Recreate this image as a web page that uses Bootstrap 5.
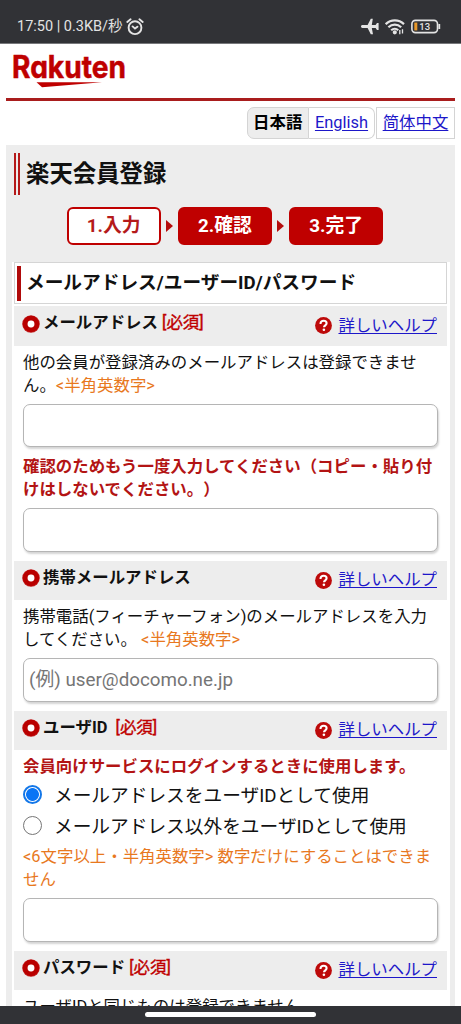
<!DOCTYPE html>
<html lang="ja">
<head>
<meta charset="utf-8">
<meta name="viewport" content="width=device-width, initial-scale=1">
<title>楽天会員登録</title>
<link href="https://cdn.jsdelivr.net/npm/bootstrap@5.3.0/dist/css/bootstrap.min.css" rel="stylesheet">
<style>
:root{--rk-red:#bf0000;--rk-gray:#ededed;--rk-dark:#313236}
body{font-family:Roboto,"Noto Sans CJK JP",sans-serif;font-size:16.43px;line-height:23px;color:#111;height:1024px;background:#fff;text-spacing-trim:space-all}
a{color:#1d17c9;text-underline-offset:2px}
.status-bar{height:43.5px;background:var(--rk-dark);color:#e2e2e2;font-size:14.5px;padding:11px 20px 0 17px;border-bottom:1px solid #77787b}
.status-icons{gap:6px}
.brand-row{height:57.5px;margin:0 6px;border-bottom:3px solid #a91d1d;padding:5px 0 0 6px}
.lang-row{height:44px;padding:6px 6px 5.5px}
.lang-row>*{height:32px;line-height:29px;border:1px solid #d4d4d4}
.lang-on{width:62.5px;background:var(--rk-gray);border-radius:7px 0 0 7px;color:#000}
.lang-en{width:66px;border-left:0!important;border-radius:0 7px 7px 0}
.lang-zh{width:79px;margin-left:1px}
.panel{margin:0 6px;background:var(--rk-gray);padding-top:8px;min-height:0}
.page-title{font-size:23.4px;line-height:42px;height:42px;padding-left:6px;color:#111}
.title-bars{width:6px;height:42px;border:solid #b51a1a;border-width:0 2px}
.steps{height:67px;padding:12px 0 0 61px}
.step{width:93.5px;height:38px;border:2px solid var(--rk-red);border-radius:6px;background:var(--rk-red);color:#fff;font-size:18.8px;line-height:34px}
.step-now{background:#fff;color:#b51a1a}
.step-arrow{width:7px;height:12px;margin:13px 5px 0 5.7px}
.sheet{margin:0 5px 0 6px;background:#fff;padding:0 3px 0 2px}
.sheet-title{height:42px;border:1px solid #d5d5d5;padding:3px 3px 2px 2px;font-size:18.7px;line-height:35px;margin-bottom:2px;color:#111}
.sheet-title::before{content:"";width:4px;height:35px;background:#b00a0a;margin-right:5px}
.field-head{height:39.5px;background:var(--rk-gray);padding:0 10px 0 8px;color:#111}
.field-head .lbl{line-height:34px}
.field-head .hlp{line-height:38px}
.ring{width:18px;height:18px;margin:8.5px 3px 0 0}
.q-mark{width:17px;height:17px;margin-right:6.5px}
.need{color:var(--rk-red);-webkit-text-stroke:.4px var(--rk-red)}
.warn{color:#b31414;font-weight:700}
.hint{color:#e8781e}
.field-body{padding:5px 9px 9px}
.field-body p{margin:0;white-space:nowrap}
.field-body .form-control{height:43.5px;margin-top:7px;border:1px solid #b5b5b5;border-radius:7px;box-shadow:1px 2px 2px #d5d5d5;font-size:18.8px;padding:0 5px;color:#111;background:#fff}
.form-control+.warn{margin-top:8px}
.choices{padding:3px 0 2px}
.form-control::placeholder{color:#757575!important}
.choice{height:31px;font-size:18.7px;line-height:31px;white-space:nowrap}
.choice input{appearance:none;width:19px;height:19px;border:1.5px solid #767676;border-radius:50%;margin:0 12px 4px 0;background:#fff}
.choice input:checked{border:2px solid #1377e8;background:radial-gradient(circle,#0a75f5 0 6px,#fff 6.8px)}
.nav-strip{height:18.5px;background:var(--rk-dark);padding-top:6.5px}
.nav-pill{width:171px;height:5px;border-radius:3px;background:#fff}
</style>
</head>
<body class="d-flex flex-column overflow-hidden">
<svg class="d-none">
  <symbol id="ring" viewBox="0 0 17 17"><circle cx="8.5" cy="8.5" r="8.3" fill="#c63030"/><circle cx="8.5" cy="8.5" r="5.6" fill="none" stroke="#b90000" stroke-width="4.4"/><circle cx="8.5" cy="8.5" r="3.2" fill="#fff"/></symbol>
  <symbol id="help" viewBox="0 0 17 17"><circle cx="8.5" cy="8.5" r="8.4" fill="#bd0a0a"/><path d="M5.5 6.9C5.5 4.8 6.8 3.8 8.6 3.8s3 1 3 2.5c0 2-2.6 2-2.6 4" fill="none" stroke="#fff" stroke-width="2.1"/><circle cx="8.9" cy="12.8" r="1.3" fill="#fff"/></symbol>
</svg>

<div class="status-bar d-flex flex-shrink-0 align-items-center justify-content-between">
  <div class="d-flex align-items-center">
    <span>17:50 | 0.3KB/秒</span>
    <svg width="18" height="18" viewBox="0 0 18 18" style="margin-left:3px" fill="none" stroke="#e4e4e4" stroke-width="1.9" stroke-linecap="round"><circle cx="9" cy="9.7" r="6.4"/><path d="M1.3 4 4.6 1.3M16.7 4l-3.3-2.7M6.6 8.4 9 10.6l2.4-1.9"/></svg>
  </div>
  <div class="status-icons d-flex align-items-center">
    <svg width="18" height="17" viewBox="0 0 18 17" fill="#e4e4e4"><path d="M0 8.5C0 7.8.6 7.1 1.4 7.1H6.6L9.8.8h2L10.8 7.1h3.8l1.4-2h1.6v6.8H16l-1.4-2h-3.8l1.2 6.3h-2.2L6.6 9.9H1.4C.6 9.9 0 9.2 0 8.5z"/></svg>
    <svg width="20" height="16" viewBox="0 0 20 16" fill="none" stroke="#e4e4e4" stroke-width="2.2"><path d="M.7 5.1C5.8.1 13.8.1 19 5.1M3.4 8.3c3.8-3.7 9-3.7 12.8 0M6.2 11.3c2.2-2.1 5-2.1 7 0"/><circle cx="9.8" cy="13.3" r="1" fill="#e4e4e4"/><path d="M14.8 11v4.3M17.5 10.3v4.1" stroke-width="1.3"/></svg>
    <svg width="30" height="15" viewBox="0 0 30 15"><rect x=".9" y="1.4" width="25.6" height="12.2" rx="3.5" fill="none" stroke="#e4e4e4" stroke-width="1.6"/><path d="M28.3 5v5" stroke="#e4e4e4" stroke-width="1.8"/><rect x="3.3" y="3.6" width="3" height="7.8" fill="#e8982a"/><text x="8.3" y="11" font-size="9.5" font-weight="500" fill="#e4e4e4">13</text></svg>
  </div>
</div>

<header class="brand-row flex-shrink-0">
  <svg class="d-block overflow-visible" width="116" height="40" viewBox="0 0 116 40" role="img" aria-label="Rakuten">
    <text x="0" y="29.2" textLength="114" lengthAdjust="spacingAndGlyphs" fill="#bf0000" stroke="#bf0000" stroke-width=".5" style="font:700 31px Inter,sans-serif;font-feature-settings:'cv11'">Rakuten</text>
    <path d="M24.5 33.2H90L30 38.2z" fill="#bf0000"/>
  </svg>
</header>

<nav class="lang-row d-flex flex-shrink-0 justify-content-end text-center">
  <strong class="lang-on">日本語</strong>
  <span class="lang-en"><a href="#">English</a></span>
  <span class="lang-zh"><a href="#">简体中文</a></span>
</nav>

<main class="panel flex-fill overflow-hidden">
  <div class="d-flex ms-2"><span class="title-bars"></span><h1 class="page-title m-0 fw-bold">楽天会員登録</h1></div>
  <div class="steps d-flex align-items-start text-center fw-bold">
    <span class="step step-now">1.入力</span>
    <svg class="step-arrow" viewBox="0 0 7 12"><path d="M0 0 7 6 0 12z" fill="#b50d0d"/></svg>
    <span class="step">2.確認</span>
    <svg class="step-arrow" viewBox="0 0 7 12"><path d="M0 0 7 6 0 12z" fill="#b50d0d"/></svg>
    <span class="step">3.完了</span>
  </div>

  <form class="sheet">
    <h2 class="sheet-title d-flex fw-bold">メールアドレス/ユーザーID/パスワード</h2>

    <section>
      <div class="field-head d-flex">
        <svg class="ring"><use href="#ring"/></svg>
        <span class="lbl flex-fill"><b>メールアドレス</b> <span class="need">[必須]</span></span>
        <span class="hlp d-flex align-items-center"><svg class="q-mark"><use href="#help"/></svg><a href="#">詳しいヘルプ</a></span>
      </div>
      <div class="field-body">
        <p>他の会員が登録済みのメールアドレスは登録できませ<br>ん。<span class="hint">&lt;半角英数字&gt;</span></p>
        <input class="form-control" type="text">
        <p class="warn">確認のためもう一度入力してください（コピー・貼り付<br>けはしないでください。）</p>
        <input class="form-control" type="text">
      </div>
    </section>

    <section>
      <div class="field-head d-flex">
        <svg class="ring"><use href="#ring"/></svg>
        <span class="lbl flex-fill"><b>携帯メールアドレス</b></span>
        <span class="hlp d-flex align-items-center"><svg class="q-mark"><use href="#help"/></svg><a href="#">詳しいヘルプ</a></span>
      </div>
      <div class="field-body">
        <p>携帯電話(フィーチャーフォン)のメールアドレスを入力<br>してください。 <span class="hint">&lt;半角英数字&gt;</span></p>
        <input class="form-control" type="text" placeholder="(例) user@docomo.ne.jp">
      </div>
    </section>

    <section>
      <div class="field-head d-flex">
        <svg class="ring"><use href="#ring"/></svg>
        <span class="lbl flex-fill"><b>ユーザID</b>&nbsp; <span class="need">[必須]</span></span>
        <span class="hlp d-flex align-items-center"><svg class="q-mark"><use href="#help"/></svg><a href="#">詳しいヘルプ</a></span>
      </div>
      <div class="field-body">
        <p class="warn">会員向けサービスにログインするときに使用します。</p>
        <div class="choices">
          <label class="choice d-flex align-items-center"><input type="radio" name="uid" checked>メールアドレスをユーザIDとして使用</label>
          <label class="choice d-flex align-items-center"><input type="radio" name="uid">メールアドレス以外をユーザIDとして使用</label>
        </div>
        <p class="hint">&lt;6文字以上・半角英数字&gt; 数字だけにすることはできま<br>せん</p>
        <input class="form-control" type="text">
      </div>
    </section>

    <section>
      <div class="field-head d-flex">
        <svg class="ring"><use href="#ring"/></svg>
        <span class="lbl flex-fill"><b>パスワード</b> <span class="need">[必須]</span></span>
        <span class="hlp d-flex align-items-center"><svg class="q-mark"><use href="#help"/></svg><a href="#">詳しいヘルプ</a></span>
      </div>
      <div class="field-body"><p>ユーザIDと同じものは登録できません。</p></div>
    </section>
  </form>
</main>

<footer class="nav-strip flex-shrink-0 d-flex justify-content-center"><span class="nav-pill"></span></footer>
<script src="https://cdn.jsdelivr.net/npm/bootstrap@5.3.0/dist/js/bootstrap.bundle.min.js"></script>
</body>
</html>
